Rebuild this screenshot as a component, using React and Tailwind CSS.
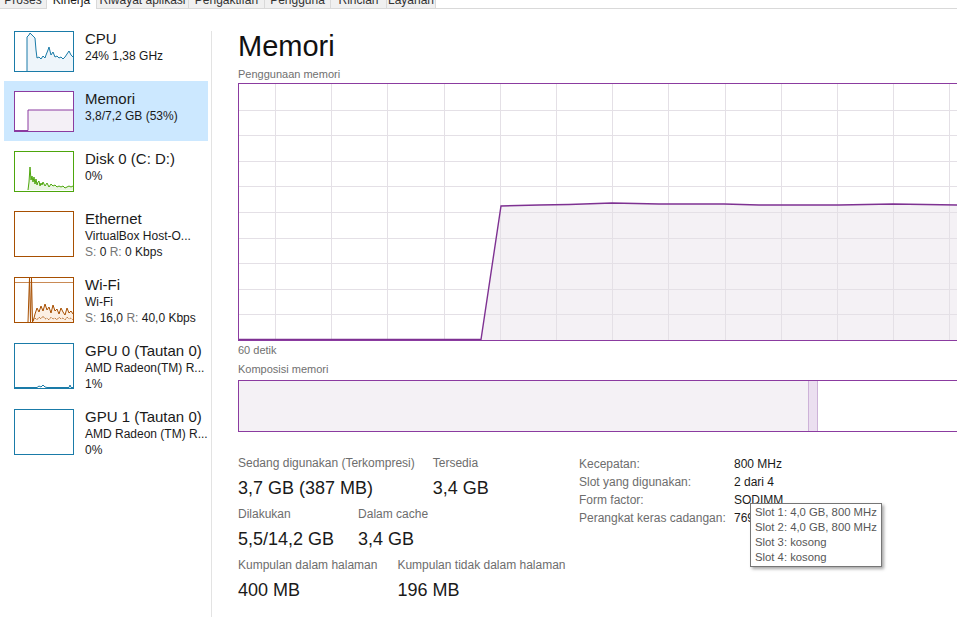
import React from "react";

const tabs = [
  { label: "Proses", w: "w-[47px]" },
  { label: "Kinerja", w: "w-[50px]", active: true },
  { label: "Riwayat aplikasi", w: "w-[92px]" },
  { label: "Pengaktifan", w: "w-[76px]" },
  { label: "Pengguna", w: "w-[66px]" },
  { label: "Rincian", w: "w-[56px]" },
  { label: "Layanan", w: "w-[49px]" },
];

function CpuThumb() {
  const pts =
    "12,39 12,5 14,3 15,1 16,2 18,4 20,6 21,18 22,26 24,25 26,27 28,24 30,26 31,23 33,18 34,15 35,19 36,23 38,20 40,25 42,24 44,26 46,25 48,27 50,25 52,22 54,19 56,23 58,25";
  return (
    <svg width="58" height="39" viewBox="0 0 58 39" className="block">
      <polygon points={`${pts} 58,39`} fill="#eef5fa" />
      <polyline points={pts} fill="none" stroke="#1a7ba8" strokeWidth="1" />
    </svg>
  );
}

function MemThumb() {
  return (
    <svg width="58" height="39" viewBox="0 0 58 39" className="block">
      <polygon points="13,39 13,18 58,18 58,39" fill="#f4f0f6" />
      <polyline points="0,38.5 13,38.5 13,18 58,18" fill="none" stroke="#8b3ba0" strokeWidth="1" />
    </svg>
  );
}

function DiskThumb() {
  const pts =
    "13,38 14,30 15,15 16,28 17,24 18,30 19,25 20,32 21,27 22,33 23,30 24,29 25,34 26,31 27,33 28,30 30,34 32,31 34,35 36,32 38,34 40,33 42,35 44,34 46,35 48,34 50,36 52,35 54,34 56,35 58,34";
  return (
    <svg width="58" height="38" viewBox="0 0 58 38" className="block">
      <polygon points={`${pts} 58,38`} fill="#eaf5e2" />
      <polyline points={pts} fill="none" stroke="#4da60c" strokeWidth="1" />
    </svg>
  );
}

function WifiThumb() {
  const pts =
    "19,40 20,36 22,30 24,34 26,28 28,33 30,26 32,32 34,29 36,35 38,27 40,33 42,31 44,36 46,30 48,34 50,37 52,30 54,35 56,33 58,36";
  const pts2 =
    "18,43 20,40 22,42 24,39 26,41 28,38 30,41 32,40 34,42 36,39 38,41 40,40 42,42 44,39 46,41 48,40 50,42 52,39 54,41 56,40 58,42";
  return (
    <svg width="58" height="44" viewBox="0 0 58 44" className="block">
      <line x1="0" y1="4.5" x2="58" y2="4.5" stroke="#c98a55" strokeWidth="1" />
      <polygon points={`18,44 ${pts} 58,44`} fill="#fcefe3" />
      <polyline
        points="13,44 14.5,0 15.5,44 16.5,0 17.5,44 19,40"
        fill="none"
        stroke="#a74f01"
        strokeWidth="1"
      />
      <polyline points={pts} fill="none" stroke="#a74f01" strokeWidth="1" />
      <polyline points={pts2} fill="none" stroke="#a74f01" strokeWidth="1" strokeDasharray="1 1" />
    </svg>
  );
}

function GpuThumb() {
  return (
    <svg width="58" height="44" viewBox="0 0 58 44" className="block">
      <polyline
        points="0,43.5 22,43.5 24,42 26,43 28,41 30,43 32,43.5 54,43.5 55,41 56,43.5 58,43.5"
        fill="none"
        stroke="#1a7ba8"
        strokeWidth="1"
      />
    </svg>
  );
}

function SideItem({ title, lines, thumb, color, tall, active }) {
  return (
    <div
      className={`flex gap-[11px] pl-[10px] pt-[10px] ${tall ? "h-[66px]" : "h-[60px]"} ${
        active ? "bg-[#cce8ff]" : ""
      }`}
    >
      <div
        className={`w-[60px] ${tall ? "h-[46px]" : "h-[41px]"} border bg-white shrink-0 ${color}`}
      >
        {thumb}
      </div>
      <div className="-mt-[1px] text-[#1a1a1a]">
        <div className="text-[15px] leading-[18px]">{title}</div>
        {lines.map((l, i) => (
          <div key={i} className="text-[12px] leading-[16px] whitespace-nowrap">
            {l}
          </div>
        ))}
      </div>
    </div>
  );
}

function UsageGraph() {
  const W = 778;
  const H = 256;
  const hLines = [];
  for (let k = 1; k < 10; k++) hLines.push(Math.round(25.6 * k) + 0.5);
  const vLines = [];
  for (let k = 0; k < 14; k++) vLines.push(Math.round(36 + 56.2 * k) + 0.5);
  const data =
    "0,255.5 242,255.5 262,122 300,121 330,120.5 373,119 420,120 485,120 520,121 600,121 654,120 720,121 778,121";
  return (
    <svg width={W} height={H} viewBox={`0 0 ${W} ${H}`} className="block">
      <polygon points={`242,256 ${data.split(" ").slice(2).join(" ")} 778,256`} fill="#f4f1f5" />
      {hLines.map((y) => (
        <line key={"h" + y} x1="0" y1={y} x2={W} y2={y} stroke="#e4e0e6" strokeWidth="1" />
      ))}
      {vLines.map((x) => (
        <line key={"v" + x} x1={x} y1="0" x2={x} y2={H} stroke="#e4e0e6" strokeWidth="1" />
      ))}
      <polyline points={data} fill="none" stroke="#7e3192" strokeWidth="1.4" />
    </svg>
  );
}

function Stat({ label, value }) {
  return (
    <div>
      <div className="text-[12px] leading-[15px] text-[#6d6d6d] whitespace-nowrap">{label}</div>
      <div className="mt-[6px] text-[18px] leading-[22px] text-[#1a1a1a] whitespace-nowrap">{value}</div>
    </div>
  );
}

export default function App() {
  const gray = (t) => <span className="text-[#767676]">{t}</span>;
  return (
    <div className="w-[957px] h-[617px] overflow-hidden bg-white font-['Liberation_Sans',Arial,sans-serif] text-[#1a1a1a]">
      <div className="h-[9px] overflow-hidden">
        <div className="-mt-[10px] flex h-[19px] text-[12px] leading-[18px]">
          {tabs.map((t) => (
            <div
              key={t.label}
              className={`${t.w} shrink-0 text-center whitespace-nowrap border-t border-r border-[#d9d9d9] ${
                t.active ? "bg-white text-[#1a1a1a]" : "bg-[#f0f0f0] border-b text-[#333]"
              }`}
            >
              {t.label}
            </div>
          ))}
          <div className="flex-1 border-b border-[#d9d9d9]" />
        </div>
      </div>

      <div className="flex h-[608px]">
        <div className="w-[211px] shrink-0 pt-[12px] pl-[4px]">
          <div className="w-[204px]">
            <SideItem title="CPU" lines={["24% 1,38 GHz"]} thumb={<CpuThumb />} color="border-[#1a7ba8]" />
            <SideItem
              title="Memori"
              lines={["3,8/7,2 GB (53%)"]}
              thumb={<MemThumb />}
              color="border-[#8b3ba0]"
              active
            />
            <SideItem title="Disk 0 (C: D:)" lines={["0%"]} thumb={<DiskThumb />} color="border-[#4da60c]" />
            <SideItem
              title="Ethernet"
              lines={[
                "VirtualBox Host-O...",
                <>
                  {gray("S:")} 0 {gray("R:")} 0 Kbps
                </>,
              ]}
              thumb={null}
              color="border-[#a74f01]"
              tall
            />
            <SideItem
              title="Wi-Fi"
              lines={[
                "Wi-Fi",
                <>
                  {gray("S:")} 16,0 {gray("R:")} 40,0 Kbps
                </>,
              ]}
              thumb={<WifiThumb />}
              color="border-[#a74f01]"
              tall
            />
            <SideItem
              title="GPU 0 (Tautan 0)"
              lines={["AMD Radeon(TM) R...", "1%"]}
              thumb={<GpuThumb />}
              color="border-[#1a7ba8]"
              tall
            />
            <SideItem
              title="GPU 1 (Tautan 0)"
              lines={["AMD Radeon (TM) R...", "0%"]}
              thumb={null}
              color="border-[#1a7ba8]"
              tall
            />
          </div>
        </div>
        <div className="w-px shrink-0 mt-[22px] bg-[#e3e3e3]" />

        <div className="flex-1 min-w-0 overflow-hidden pl-[26px] pt-[20px]">
          <div className="text-[29px] leading-[35px] text-[#111]">Memori</div>
          <div className="mt-[3px] text-[11px] leading-[14px] text-[#707070]">Penggunaan memori</div>
          <div className="mt-[2px] w-[780px] h-[258px] border border-[#8b3ba0]">
            <UsageGraph />
          </div>
          <div className="mt-[2px] text-[11px] leading-[14px] text-[#707070]">60 detik</div>
          <div className="mt-[5px] text-[11px] leading-[14px] text-[#707070]">Komposisi memori</div>
          <div className="mt-[4px] w-[780px] h-[52px] border border-[#8b3ba0] flex">
            <div className="w-[569px] h-full bg-[#f4f1f5]" />
            <div className="w-[10px] h-full bg-[#ebdff0] border-l border-r border-[#cdb2d8]" />
            <div className="flex-1 h-full bg-white" />
          </div>

          <div className="mt-[24px] flex">
            <div className="w-[341px] shrink-0 flex flex-col gap-[8px]">
              <div className="flex gap-[18px]">
                <Stat label="Sedang digunakan (Terkompresi)" value="3,7 GB (387 MB)" />
                <Stat label="Tersedia" value="3,4 GB" />
              </div>
              <div className="flex gap-[24px]">
                <Stat label="Dilakukan" value="5,5/14,2 GB" />
                <Stat label="Dalam cache" value="3,4 GB" />
              </div>
              <div className="flex gap-[20px]">
                <Stat label="Kumpulan dalam halaman" value="400 MB" />
                <Stat label="Kumpulan tidak dalam halaman" value="196 MB" />
              </div>
            </div>

            <div className="relative -mt-[1px] grid grid-cols-[155px_auto] content-start text-[12px] leading-[18px]">
              <div className="text-[#6d6d6d]">Kecepatan:</div>
              <div>800 MHz</div>
              <div className="text-[#6d6d6d]">Slot yang digunakan:</div>
              <div>2 dari 4</div>
              <div className="text-[#6d6d6d]">Form factor:</div>
              <div>SODIMM</div>
              <div className="text-[#6d6d6d] whitespace-nowrap">Perangkat keras cadangan:</div>
              <div>769 MB</div>

              <div className="absolute left-[171px] top-[48px] w-[132px] h-[64px] bg-white border border-[#767676] shadow-[2px_2px_3px_rgba(0,0,0,0.35)] pl-[4px] pt-[1px] text-[11.3px] leading-[15px] text-[#575757] whitespace-nowrap">
                <div>Slot 1: 4,0 GB, 800 MHz</div>
                <div>Slot 2: 4,0 GB, 800 MHz</div>
                <div>Slot 3: kosong</div>
                <div>Slot 4: kosong</div>
              </div>
            </div>
          </div>
        </div>
      </div>
    </div>
  );
}
